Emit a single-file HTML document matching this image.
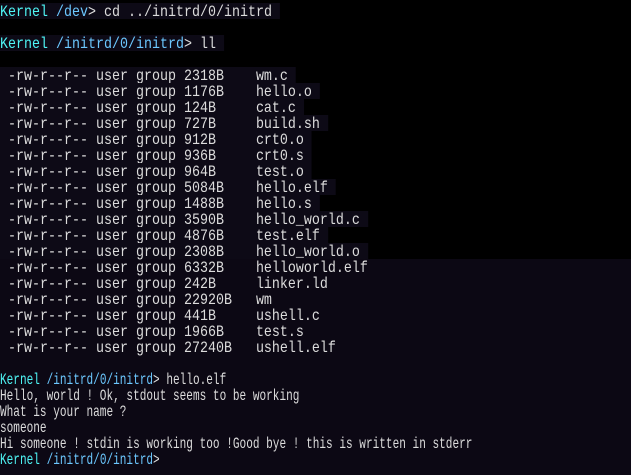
<!DOCTYPE html>
<html><head><style>
html,body{margin:0;padding:0;width:631px;height:475px;overflow:hidden;background:#0c0814;}
#top{position:absolute;left:0;top:0;width:631px;height:259px;background:#000;}
.l{position:absolute;left:0;height:16px;line-height:16px;font-family:"Liberation Mono",monospace;font-size:16px;color:#dcdcdc;white-space:pre;}
.w{transform:scaleX(0.833);transform-origin:0 0;}
.b{background:#0d0a16;display:inline-block;height:16px;}
.k{color:#4ff5f5}.p{color:#6cc8ff}
.n{transform:scaleX(0.693);transform-origin:0 0;}
.x{position:relative;top:1px}
</style></head><body>
<div id="top"></div>
<div class="l w" style="top:3px"><span class="b"><span class="x"><span class="k">Kernel</span> <span class="p">/dev</span>&gt; cd ../initrd/0/initrd </span></span></div>
<div class="l w" style="top:35px"><span class="b"><span class="x"><span class="k">Kernel</span> <span class="p">/initrd/0/initrd</span>&gt; ll </span></span></div>
<div class="l w" style="top:67px"><span class="b"><span class="x"> -rw-r--r-- user group 2318B    wm.c </span></span></div>
<div class="l w" style="top:83px"><span class="b"><span class="x"> -rw-r--r-- user group 1176B    hello.o </span></span></div>
<div class="l w" style="top:99px"><span class="b"><span class="x"> -rw-r--r-- user group 124B     cat.c </span></span></div>
<div class="l w" style="top:115px"><span class="b"><span class="x"> -rw-r--r-- user group 727B     build.sh </span></span></div>
<div class="l w" style="top:131px"><span class="b"><span class="x"> -rw-r--r-- user group 912B     crt0.o </span></span></div>
<div class="l w" style="top:147px"><span class="b"><span class="x"> -rw-r--r-- user group 936B     crt0.s </span></span></div>
<div class="l w" style="top:163px"><span class="b"><span class="x"> -rw-r--r-- user group 964B     test.o </span></span></div>
<div class="l w" style="top:179px"><span class="b"><span class="x"> -rw-r--r-- user group 5084B    hello.elf </span></span></div>
<div class="l w" style="top:195px"><span class="b"><span class="x"> -rw-r--r-- user group 1488B    hello.s </span></span></div>
<div class="l w" style="top:211px"><span class="b"><span class="x"> -rw-r--r-- user group 3590B    hello_world.c </span></span></div>
<div class="l w" style="top:227px"><span class="b"><span class="x"> -rw-r--r-- user group 4876B    test.elf </span></span></div>
<div class="l w" style="top:243px"><span class="b"><span class="x"> -rw-r--r-- user group 2308B    hello_world.o </span></span></div>
<div class="l w" style="top:260px"> -rw-r--r-- user group 6332B    helloworld.elf</div>
<div class="l w" style="top:276px"> -rw-r--r-- user group 242B     linker.ld</div>
<div class="l w" style="top:292px"> -rw-r--r-- user group 22920B   wm</div>
<div class="l w" style="top:308px"> -rw-r--r-- user group 441B     ushell.c</div>
<div class="l w" style="top:324px"> -rw-r--r-- user group 1966B    test.s</div>
<div class="l w" style="top:340px"> -rw-r--r-- user group 27240B   ushell.elf</div>
<div class="l n" style="top:372px"><span class="k">Kernel</span> <span class="p">/initrd/0/initrd</span>&gt; hello.elf</div>
<div class="l n" style="top:388px">Hello, world ! Ok, stdout seems to be working</div>
<div class="l n" style="top:404px">What is your name ?</div>
<div class="l n" style="top:420px">someone</div>
<div class="l n" style="top:436px">Hi someone ! stdin is working too !Good bye ! this is written in stderr</div>
<div class="l n" style="top:452px"><span class="k">Kernel</span> <span class="p">/initrd/0/initrd</span>&gt;</div>
</body></html>
